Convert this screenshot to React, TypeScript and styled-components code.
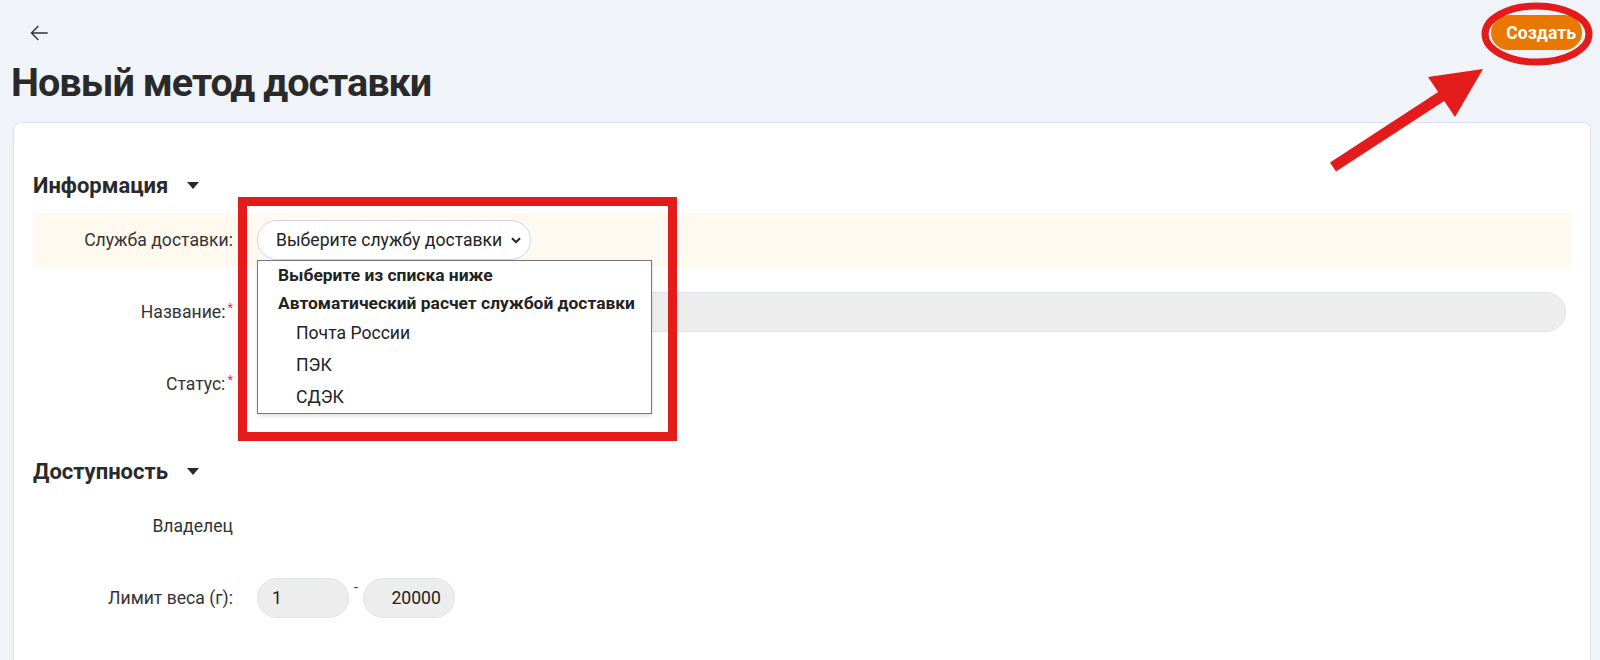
import React from "react";
import styled, { createGlobalStyle } from "styled-components";

const GlobalStyle = createGlobalStyle`
  html, body { margin: 0; padding: 0; background: #f0f3f8; }
  body { font-family: Roboto, "Noto Sans", "Liberation Sans", sans-serif; color: #2b2b2b; }
  * { box-sizing: border-box; }
`;

const Page = styled.div`
  position: relative;
  width: 1600px;
  height: 660px;
  overflow: hidden;
  padding: 15px 9px 0 13px;
`;

const TopBar = styled.div`
  display: flex;
  align-items: center;
  justify-content: space-between;
  height: 35px;
`;

const BackButton = styled.button`
  display: flex;
  align-items: center;
  justify-content: center;
  width: 26px;
  height: 26px;
  margin-left: 13px;
  padding: 0;
  border: none;
  background: transparent;
  color: #333;
  cursor: pointer;
`;

const CreateButton = styled.button`
  height: 35px;
  padding: 0 6px 0 15px;
  margin-right: 9px;
  border: none;
  border-radius: 18px;
  background: #e87800;
  color: #fff;
  font-family: Roboto, sans-serif;
  font-weight: 700;
  font-size: 17.6px;
  cursor: pointer;
`;

const Title = styled.h1`
  margin: 9px 0 15.5px -2px;
  font-size: 39.6px;
  line-height: 47.5px;
  letter-spacing: -1px;
  font-weight: 700;
  color: #2a2a2a;
`;

const Card = styled.div`
  background: #fff;
  border: 1px solid #dde3ee;
  border-radius: 8px;
  padding: 48px 19px 80px 19px;
`;

const Section = styled.section<{ $gapTop?: number }>`
  display: flex;
  flex-direction: column;
  margin-top: ${(p) => p.$gapTop ?? 0}px;
`;

const SectionHeader = styled.div`
  display: flex;
  align-items: center;
  gap: 19px;
  height: 28px;
  margin-bottom: 14px;
  font-size: 22px;
  font-weight: 700;
  color: #2a2a2a;
`;

const Rows = styled.div`
  display: flex;
  flex-direction: column;
  gap: 18px;
`;

const Row = styled.div<{ $highlight?: boolean }>`
  display: grid;
  grid-template-columns: 200px 1fr;
  column-gap: 24px;
  align-items: center;
  min-height: 54px;
  padding: 7px 5px 7px 0;
  background: ${(p) => (p.$highlight ? "#fff9f0" : "transparent")};
`;

const Label = styled.div`
  text-align: right;
  font-size: 17.6px;
  color: #333;
  white-space: nowrap;
`;

const Req = styled.span`
  color: #e53935;
  font-size: 13px;
  vertical-align: top;
  margin-left: 2px;
  position: relative;
  top: -2px;
`;

const SelectWrap = styled.div<{ $w: number }>`
  position: relative;
  width: ${(p) => p.$w}px;
`;

const SelectBox = styled.div`
  display: flex;
  align-items: center;
  justify-content: space-between;
  height: 40px;
  padding: 0 9px 0 18px;
  border: 1px solid #cfd6e2;
  border-radius: 20px;
  background: #fff;
  font-size: 17.6px;
  color: #222;
`;

const Dropdown = styled.div`
  position: absolute;
  top: 100%;
  left: 0;
  width: 395px;
  z-index: 5;
  background: #fff;
  border: 1px solid #767676;
  box-shadow: 0 2px 4px rgba(0, 0, 0, 0.12);
`;

const DropGroup = styled.div`
  height: 28px;
  line-height: 28px;
  padding-left: 20px;
  font-size: 17.4px;
  font-weight: 700;
  color: #222;
  white-space: nowrap;
`;

const DropOption = styled.div`
  height: 32px;
  line-height: 32px;
  padding-left: 38px;
  font-size: 17.6px;
  color: #222;
`;

const TextInput = styled.div<{ $w?: number; $align?: "left" | "right" }>`
  width: ${(p) => (p.$w ? `${p.$w}px` : "100%")};
  height: 40px;
  line-height: 38px;
  padding: 0 13px 0 14px;
  border: 1px solid #dde3ee;
  border-radius: 20px;
  background: #ededed;
  font-size: 17.6px;
  color: #222;
  text-align: ${(p) => p.$align ?? "left"};
`;

const RangeGroup = styled.div`
  display: flex;
  align-items: flex-start;
  gap: 5px;
`;

const Dash = styled.span`
  font-size: 14px;
  line-height: 18px;
  color: #333;
`;

const Overlay = styled.svg`
  position: absolute;
  top: 0;
  left: 0;
  pointer-events: none;
  z-index: 10;
`;

const Caret = () => (
  <svg width="12" height="7" viewBox="0 0 12 7">
    <path d="M0 0h12L6 7z" fill="#2a2a2a" />
  </svg>
);

const Chevron = () => (
  <svg width="10" height="7" viewBox="0 0 10 7">
    <path d="M1 1.2l4 4 4-4" fill="none" stroke="#222" strokeWidth="2" />
  </svg>
);

export default function App() {
  return (
    <>
      <GlobalStyle />
      <Page>
        <TopBar>
          <BackButton aria-label="Назад">
            <svg width="26" height="26" viewBox="0 0 24 24">
              <path
                d="M20 11.3H6.6l5.3-5.3-.9-.9L4.1 12l6.9 6.9.9-.9-5.3-5.3H20z"
                fill="#333"
              />
            </svg>
          </BackButton>
          <CreateButton>Создать</CreateButton>
        </TopBar>
        <Title>Новый метод доставки</Title>
        <Card>
          <Section>
            <SectionHeader>
              Информация <Caret />
            </SectionHeader>
            <Rows>
              <Row $highlight>
                <Label>Служба доставки:</Label>
                <SelectWrap $w={274}>
                  <SelectBox>
                    <span>Выберите службу доставки</span>
                    <Chevron />
                  </SelectBox>
                  <Dropdown>
                    <DropGroup>Выберите из списка ниже</DropGroup>
                    <DropGroup>Автоматический расчет службой доставки</DropGroup>
                    <DropOption>Почта России</DropOption>
                    <DropOption>ПЭК</DropOption>
                    <DropOption>СДЭК</DropOption>
                  </Dropdown>
                </SelectWrap>
              </Row>
              <Row>
                <Label>
                  Название:<Req>*</Req>
                </Label>
                <TextInput />
              </Row>
              <Row>
                <Label>
                  Статус:<Req>*</Req>
                </Label>
                <SelectWrap $w={200}>
                  <SelectBox>
                    <span />
                    <Chevron />
                  </SelectBox>
                </SelectWrap>
              </Row>
            </Rows>
          </Section>
          <Section $gapTop={46}>
            <SectionHeader>
              Доступность <Caret />
            </SectionHeader>
            <Rows>
              <Row>
                <Label>Владелец</Label>
              </Row>
              <Row>
                <Label>Лимит веса (г):</Label>
                <RangeGroup>
                  <TextInput $w={92}>1</TextInput>
                  <Dash>-</Dash>
                  <TextInput $w={92} $align="right">
                    20000
                  </TextInput>
                </RangeGroup>
              </Row>
            </Rows>
          </Section>
        </Card>
        <Overlay width="1600" height="660" viewBox="0 0 1600 660">
          <rect x="242.5" y="201.5" width="430" height="235" fill="none" stroke="#e31b1b" strokeWidth="9" />
          <ellipse cx="1537" cy="34" rx="52" ry="28" fill="none" stroke="#e31b1b" strokeWidth="7" />
          <line x1="1333" y1="167" x2="1445" y2="94" stroke="#e31b1b" strokeWidth="11" />
          <polygon points="1483,69 1428,77 1455,117" fill="#e31b1b" />
        </Overlay>
      </Page>
    </>
  );
}
